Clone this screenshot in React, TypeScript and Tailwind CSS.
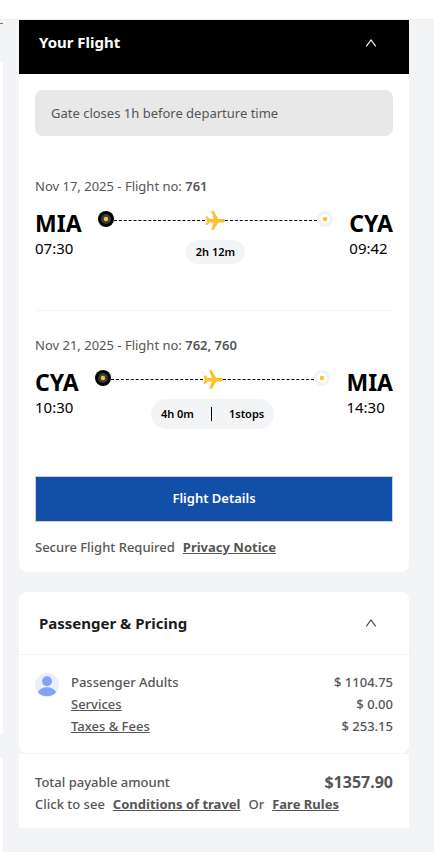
import React from "react";

type Leg = {
  date: string;
  flightNo: string;
  from: string;
  to: string;
  departs: string;
  arrives: string;
  duration: string;
  stops?: string;
};

const legs: Leg[] = [
  { date: "Nov 17, 2025", flightNo: "761", from: "MIA", to: "CYA", departs: "07:30", arrives: "09:42", duration: "2h 12m" },
  { date: "Nov 21, 2025", flightNo: "762, 760", from: "CYA", to: "MIA", departs: "10:30", arrives: "14:30", duration: "4h 0m", stops: "1stops" },
];

const prices = [
  { label: "Passenger Adults", amount: "$ 1104.75", link: false },
  { label: "Services", amount: "$ 0.00", link: true },
  { label: "Taxes & Fees", amount: "$ 253.15", link: true },
];

function Chevron() {
  return (
    <svg width="12" height="10" viewBox="0 0 12 10" fill="none" stroke="currentColor" strokeWidth="1.1" aria-hidden="true">
      <path d="M1.300 8.300 6 2l4.700 6.300" />
    </svg>
  );
}

function Plane() {
  return (
    <svg className="shrink-0" width="20" height="20" viewBox="0 0 20 20" fill="#fdc02f" aria-hidden="true">
      <path d="M20 10.700c0-1-.8-1.700-1.700-1.700h-4.900L8.800 1.400C8.500.9 8 .7 7.500.8L6.300 1.100l2.500 7.900H4.600L3 6.800c-.2-.3-.5-.4-.8-.4H.7L2 10.700.7 15h1.500c.3 0 .6-.1.8-.4l1.600-2.200h4.200l-2.500 7.400 1.200.2c.5.100 1-.1 1.300-.6l4.600-7h4.900c.9 0 1.700-.7 1.700-1.700z" />
    </svg>
  );
}

function Dot({ dark }: { dark?: boolean }) {
  return (
    <svg className="shrink-0" width="16" height="16" viewBox="0 0 16 16" aria-hidden="true">
      <circle cx="8" cy="8" r="8" fill={dark ? "#000000" : "#f2f2f3"} />
      <circle cx="8" cy="8" r="5" fill={dark ? "#3b3b3d" : "#ffffff"} />
      <circle cx="8" cy="8" r="2.200" fill="#fdc02f" />
    </svg>
  );
}

function Avatar() {
  return (
    <svg className="shrink-0" width="24" height="24" viewBox="0 0 24 24" aria-hidden="true">
      <circle cx="12" cy="12" r="12" fill="#e8effb" />
      <circle cx="12" cy="8.200" r="5" fill="#82a3f2" />
      <path d="M3 19.200c1.400-3 5-4.900 9-4.900s7.600 1.900 9 4.900c-2 2.600-5.300 3.900-9 3.900s-7-1.300-9-3.900z" fill="#82a3f2" />
    </svg>
  );
}

function FlightLeg({ leg }: { leg: Leg }) {
  return (
    <section>
      <p className="text-[13px] leading-[22px] text-[#555555]">
        {leg.date} - Flight no: <span className="font-semibold">{leg.flightNo}</span>
      </p>
      <div className="mt-3 flex gap-4 text-black">
        <div>
          <div className="text-[23px] leading-7 font-bold">{leg.from}</div>
          <div className="text-[15px] leading-[22px]">{leg.departs}</div>
        </div>
        <div className="flex flex-1 flex-col items-center pt-0.5">
          <div className="flex h-4 w-full items-center">
            <Dot dark />
            <div className="flex flex-1 items-center pt-0.5">
              <div className="flex-1 border-t border-dashed border-black" />
              <Plane />
              <div className="flex-1 border-t border-dashed border-black" />
            </div>
            <Dot />
          </div>
          <div className={`mt-[13px] flex items-center rounded-full bg-[#f3f4f6] px-2.5 text-[11px] font-semibold ${leg.stops ? "h-[30px]" : "h-6"}`}>
            <span>{leg.duration}</span>
            {leg.stops && (
              <>
                <span className="mx-[17px] h-3.5 w-px bg-black" />
                <span>{leg.stops}</span>
              </>
            )}
          </div>
        </div>
        <div>
          <div className="text-[23px] leading-7 font-bold">{leg.to}</div>
          <div className="text-[15px] leading-[22px]">{leg.arrives}</div>
        </div>
      </div>
    </section>
  );
}

export default function App() {
  return (
    <div className="flex min-h-screen flex-col bg-[#f3f4f6] font-['Noto_Sans','Open_Sans',sans-serif]">
      <header className="h-5 border-b border-[#eeeeee] bg-white" />
      <div className="flex flex-1">
        <aside className="flex w-[3px] flex-col">
          <div className="mt-[3px] h-px bg-[#777777]" />
          <div className="mt-[38px] h-[672px] rounded-r-sm bg-white" />
          <div className="mt-[23px] flex-1 rounded-tr-sm bg-white" />
        </aside>
        <main className="mr-[25px] ml-4 flex-1">
          <section className="rounded-b-lg bg-white">
            <button type="button" className="flex h-[54px] w-full items-start justify-between bg-black pt-[11px] pr-8 pl-5 text-[15px] leading-[22px] font-bold text-white">
              <span>Your Flight</span>
              <span className="pt-[7px]"><Chevron /></span>
            </button>
            <div className="p-4 pb-3.5">
              <p className="rounded-lg bg-[#e8e8e8] px-4 py-3 text-[13px] leading-[22px] text-[#555555]">Gate closes 1h before departure time</p>
              <div className="mt-[39px] border-b border-[#f3f4f6] pb-[46px]">
                <FlightLeg leg={legs[0]} />
              </div>
              <div className="mt-[23px]">
                <FlightLeg leg={legs[1]} />
              </div>
              <button type="button" className="mt-[47px] h-[46px] w-full border border-[#d0d0d0] bg-[#124fa8] text-[13px] font-semibold text-white">
                Flight Details
              </button>
              <p className="mt-3.5 text-[13px] leading-[22px] font-medium text-[#555555]">
                Secure Flight Required
                <a href="#privacy" className="ml-2 font-bold underline">Privacy Notice</a>
              </p>
            </div>
          </section>

          <section className="mt-5 rounded-lg bg-white">
            <button type="button" className="flex h-[63px] w-full items-center justify-between border-b border-[#f3f4f6] pr-8 pl-5 text-[15px] font-bold text-[#1c1c1c]">
              <span>Passenger &amp; Pricing</span>
              <span className="text-[#444444]"><Chevron /></span>
            </button>
            <div className="flex gap-3 px-4 pt-4 pb-4">
              <div className="pt-0.5"><Avatar /></div>
              <table className="flex-1 text-[13px] leading-[22px] font-medium text-[#555555]">
                <tbody>
                  {prices.map((p) => (
                    <tr key={p.label}>
                      <th scope="row" className="p-0 text-left font-medium">
                        {p.link ? <a href="#details" className="underline">{p.label}</a> : p.label}
                      </th>
                      <td className="p-0 text-right">{p.amount}</td>
                    </tr>
                  ))}
                </tbody>
              </table>
            </div>
          </section>

          <section className="border-t border-[#f3f4f6] bg-white px-4 pt-[17px] pb-[13px] text-[13px] leading-[22px] font-medium text-[#555555]">
            <div className="flex items-center justify-between">
              <span>Total payable amount</span>
              <span className="text-base leading-[22px] font-bold">$1357.90</span>
            </div>
            <p>
              Click to see
              <a href="#conditions" className="mx-2 font-bold underline">Conditions of travel</a>
              Or
              <a href="#fare-rules" className="ml-2 font-bold underline">Fare Rules</a>
            </p>
          </section>
        </main>
      </div>
    </div>
  );
}
